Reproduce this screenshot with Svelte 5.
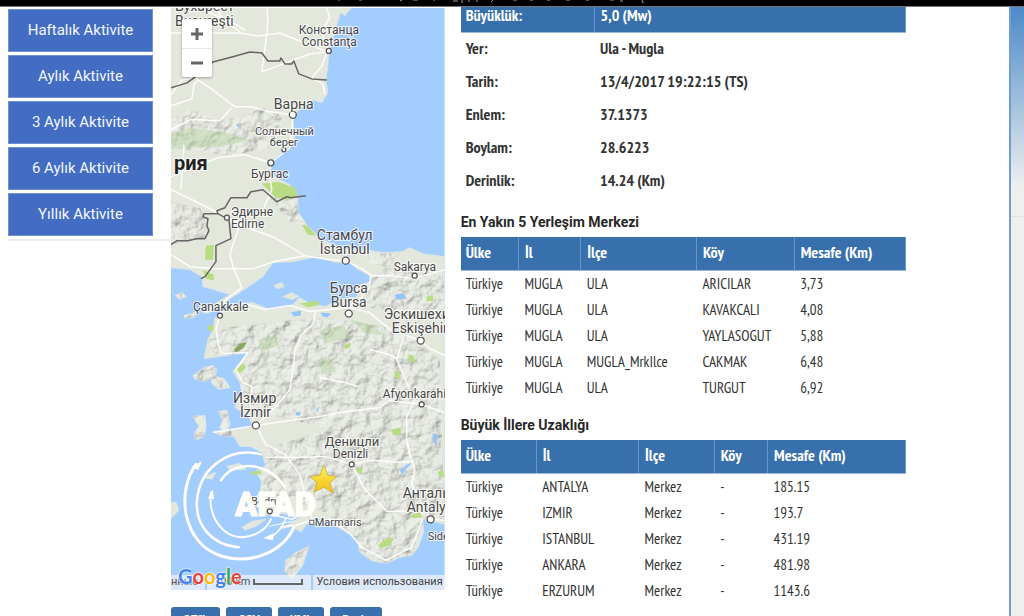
<script>
  const periods = ['Haftalık Aktivite', 'Aylık Aktivite', '3 Aylık Aktivite', '6 Aylık Aktivite', 'Yıllık Aktivite'];

  const details = [
    ['Yer:', 'Ula - Mugla'],
    ['Tarih:', '13/4/2017 19:22:15 (TS)'],
    ['Enlem:', '37.1373'],
    ['Boylam:', '28.6223'],
    ['Derinlik:', '14.24 (Km)']
  ];

  const columns = ['Ülke', 'İl', 'İlçe', 'Köy', 'Mesafe (Km)'];

  const tables = [
    {
      title: 'En Yakın 5 Yerleşim Merkezi',
      kind: 'near',
      rows: [
        ['Türkiye', 'MUGLA', 'ULA', 'ARICILAR', '3,73'],
        ['Türkiye', 'MUGLA', 'ULA', 'KAVAKCALI', '4,08'],
        ['Türkiye', 'MUGLA', 'ULA', 'YAYLASOGUT', '5,88'],
        ['Türkiye', 'MUGLA', 'MUGLA_MrkIlce', 'CAKMAK', '6,48'],
        ['Türkiye', 'MUGLA', 'ULA', 'TURGUT', '6,92']
      ]
    },
    {
      title: 'Büyük İllere Uzaklığı',
      kind: 'far',
      rows: [
        ['Türkiye', 'ANTALYA', 'Merkez', '-', '185.15'],
        ['Türkiye', 'IZMIR', 'Merkez', '-', '193.7'],
        ['Türkiye', 'ISTANBUL', 'Merkez', '-', '431.19'],
        ['Türkiye', 'ANKARA', 'Merkez', '-', '481.98'],
        ['Türkiye', 'ERZURUM', 'Merkez', '-', '1143.6']
      ]
    }
  ];

  const exportsList = ['GEïlk', 'CSV', 'KML', 'Baskı'];

  // x, y (baseline), font size, text
  const labels = [
    [175, 11, 14, 'Бухарест'],
    [175, 26, 14, 'Bucureşti'],
    [299, 34, 12, 'Констанца'],
    [302, 46, 12, 'Constanţa'],
    [274, 109, 14, 'Варна'],
    [255, 135, 11, 'Солнечный'],
    [270, 146, 11, 'берег'],
    [251, 178, 12, 'Бургас'],
    [231, 216, 12, 'Эдирне'],
    [231, 228, 12, 'Edirne'],
    [317, 240, 14, 'Стамбул'],
    [320, 254, 14, 'İstanbul'],
    [394, 271, 12, 'Sakarya'],
    [330, 293, 14, 'Бурса'],
    [331, 307, 14, 'Bursa'],
    [193, 311, 12, 'Çanakkale'],
    [384, 319, 14, 'Эскишехир'],
    [392, 333, 14, 'Eskişehir'],
    [233, 404, 14, 'Измир'],
    [240, 418, 14, 'İzmir'],
    [383, 399, 12, 'Afyonkarahisar'],
    [325, 447, 13, 'Деницли'],
    [333, 459, 12, 'Denizli'],
    [403, 499, 14, 'Анталья'],
    [407, 513, 14, 'Antalya'],
    [428, 541, 11, 'Side'],
    [315, 527, 11, 'Marmaris'],
    [251, 506, 11, 'Bodrum']
  ];

  // x, y, radius
  const towns = [
    [329, 51, 2.5], [293, 115, 3.5], [271, 163, 3], [227, 218, 2.5], [346, 261, 3.5],
    [415, 276, 2.5], [349, 314, 3.5], [220, 316, 2.5], [421, 341, 3.5], [256, 426, 3.5],
    [422, 405, 2.5], [352, 465, 2.5], [431, 520, 3.5], [270, 512, 2.5], [284, 150, 2]
  ];

  const land = [
    // Balkans and Thrace
    'M171 6L353 6L345 16L341 12L336 28L333 40L329 52L328 67L326 80L328 93L322 103L313 100L303 107L296 113L293 122L295 134L295 143L285 150L278 156L270 162L270 172L280 180L290 185L298 197L298 212L307 225L318 237L337 247L350 250L346 262L337 263L317 257L293 262L273 263L263 277L240 293L222 304L208 314L202 313L217 303L230 295L217 291L203 287L202 277L190 270L171 268Z',
    // Anatolia
    'M350 250L367 250L383 253L403 252L410 248L423 254L445 257V525L423 520L424 533L418 549L412 556L400 558L387 564L373 562L360 553L358 542L350 535L338 528L330 520L316 519L306 526L301 533L292 527L280 530L302 517L280 514L268 516L250 502L260 494L262 483L256 472L266 467L262 453L250 447L240 447L234 437L220 436L213 432L237 430L253 427L249 417L235 408L242 393L240 383L233 372L248 353L220 357L204 359L208 340L213 330L215 318L228 308L240 304L253 303L270 310L293 305L300 298L310 304L325 307L340 300L358 297L355 287L372 282L370 276L357 269L349 262Z',
    // islands
    'M193 376L204 368L213 366L217 370L215 377L224 379L230 388L219 390L212 384L211 378L205 382L195 380Z',
    'M193 417L205 416L206 428L204 437L196 441L194 434L199 427Z',
    'M218 412L227 411L230 425L226 434L220 428L223 421Z',
    'M309 547L295 554L286 561L285 572L292 580L303 566Z',
    'M184 316L198 312L194 318L185 319Z',
    'M175 296L182 293L186 297L180 300Z',
    'M274 286L282 283L284 287L277 289Z',
    'M283 297L292 293L299 297L292 300Z',
    'M171 503L176 503L179 511L171 519Z',
    'M203 478L216 473L212 480Z',
    'M227 467L240 464L246 470L230 471Z',
    'M242 528L252 522L266 520L256 527L245 531Z',
    'M318 11L324 8L330 8L326 12Z'
  ];

  const hills = [
    'M171 118L192 110L218 120L240 118L262 108L285 116L270 148L230 156L171 148Z',
    'M171 202L200 208L209 222L206 238L171 245Z',
    'M280 186L297 204L306 226L290 222L270 198Z',
    'M208 340L225 328L280 322L325 318L400 330L440 360L445 522L424 520L412 556L387 564L360 553L330 515L260 490L268 448L330 430L250 410L240 385L250 355L212 356Z',
    'M360 290L385 268L445 277V320L400 312L365 308Z',
    'M368 255L400 253L390 268L370 264Z',
    'M190 364H232V392H190Z',
    'M192 410H232V442H192Z',
    'M284 546H310V582H284Z',
    'M171 292H200V320H171Z'
  ];

  const forests = [
    'M171 135L190 128L222 132L250 140L220 147L171 149Z',
    'M258 340L275 336L280 345L262 352Z',
    'M318 360L330 358L336 372L322 375Z',
    'M350 320L375 326L384 336L366 334Z',
    'M320 330L345 326L350 338L325 344Z'
  ];

  const parks = [
    'M262 184L278 182L295 188L298 197L288 200L276 198Z',
    'M302 225L308 226L316 236L308 235Z',
    'M206 246L214 245L213 260L205 260Z',
    'M203 270L214 275L214 281L206 279Z',
    'M300 304L318 301L320 305L308 308Z',
    'M235 370L244 364L246 368L240 374Z',
    'M208 326L214 326L213 332L208 331Z',
    'M344 346L351 343L350 348L345 350Z',
    'M409 355L414 356L415 363L409 362Z',
    'M395 371L400 373L400 379L395 378Z',
    'M392 430L401 428L401 436L393 435Z',
    'M379 545L389 538L394 540L390 546L381 549Z',
    'M411 516L420 513L423 518L413 519Z',
    'M250 473L260 471L262 475L251 475Z',
    'M438 473L443 470L445 478L440 477Z',
    'M356 469L363 468L362 474L357 473Z',
    'M427 297L433 296L434 301L427 302Z'
  ];

  const lakes = [
    'M291 313L301 311L301 316L294 317Z',
    'M321 313L331 314L328 318L323 317Z',
    'M400 471L408 465L412 464L406 470L402 475Z',
    'M433 434L438 435L437 447L434 442Z',
    'M395 295L404 294L407 299L397 300Z',
    'M296 413L301 412L300 416L296 416Z',
    'M316 411L320 406L318 412Z',
    'M236 125L239 124L239 128Z'
  ];

  const roads = [
    'M171 33L210 33L240 33L258 36L280 33L310 45L328 52',
    'M214 6L226 22L240 32',
    'M267 6L268 22L266 42L264 56L262 72L310 54L328 52',
    'M327 8L330 18L322 30L324 42L329 50',
    'M200 7L210 13L228 20L245 30',
    'M326 55L322 66L312 78L323 84L325 94',
    'M195 78L210 88L235 107L252 107L270 112L293 115L292 130L290 148L271 163L270 177L272 190L264 208',
    'M171 106L192 99L194 84L198 80',
    'M171 130L190 120L200 120L220 121L232 108',
    'M171 177L195 167L218 158L245 155L271 163',
    'M171 190L192 200L212 210L227 218L250 229L275 238L305 256L330 260L346 261L362 269L372 276L390 276L415 279L445 270',
    'M240 225L234 242L230 255L234 270L242 288L226 300L220 315L216 330L219 347L222 354L248 353',
    'M171 255L190 267L215 269L254 269L274 262L305 256',
    'M184 145L183 160L181 190',
    'M248 353L236 370L243 383L252 387L250 405L256 426L266 445L285 455L300 475L305 495L313 522',
    'M371 277L369 289L362 298L349 308L370 313L392 331L421 341L430 349L445 356',
    'M240 303L265 310L290 306L310 312L349 308M316 311L313 325L302 335L295 350L294 365L290 390L278 405L256 426L213 433',
    'M256 426L290 421L320 417L340 413L380 408L390 401L422 405L445 413M404 337L397 360L405 378L414 400L407 418L407 440L410 455L415 470L412 485L423 505L431 520L445 521',
    'M266 458L305 458L325 457L352 465L365 490L387 512L420 512',
    'M352 465L370 461L400 463L414 462M313 522L330 520L350 534L362 548L386 561L412 548L423 520',
    'M304 514L292 520L270 515M314 520L296 526L280 528',
    'M320 378L345 383L358 387M370 350L390 355L398 360M171 95L182 80L200 76'
  ];

  const borders = [
    'M171 88L187 83L194 78L213 62L232 57L250 52L262 53L268 61L280 61L281 58L285 64L292 64L294 61L299 74L312 79L327 80',
    'M171 245L177 241L188 241L196 239L205 239L209 231L207 226L208 219L203 217L204 214L218 214L217 211L225 208L231 198L247 198L251 192L263 190L277 202L287 197L291 198L306 196',
    'M218 214L229 220L231 239L216 246L216 262L205 277L201 279'
  ];
</script>

<header class="statusbar">
  <svg width="320" height="3" viewBox="0 0 320 3" aria-hidden="true">
    <path d="M4 0V1M24 0h3M65 0l2 1M78 0h5M99 0v1M118 1h5M127 0v3M134 0v2M142 0v2M158 0l-2 2M178 0h4M195 0h3M212 0h3M231 0h4M251 0h3M275 0h4M285 1h3M307 0q0 3 2 3" stroke="#999" fill="none" />
  </svg>
</header>

<div class="page">
  <main>
    <nav>
      {#each periods as period}
        <button class="period" type="button">{period}</button>
      {/each}
    </nav>

    <section class="mapside">
      <div class="map">
        <svg class="terrain" viewBox="171 8 274 583" role="img" aria-label="Harita">
          <defs>
            <filter id="relief" x="0" y="0" width="100%" height="100%">
              <feTurbulence type="fractalNoise" baseFrequency="0.08" numOctaves="4" seed="8" result="noise" />
              <feDiffuseLighting in="noise" surfaceScale="5" lighting-color="#f2f4ef">
                <feDistantLight azimuth="225" elevation="60" />
              </feDiffuseLighting>
              <feComposite in2="SourceGraphic" operator="in" />
            </filter>
            <clipPath id="coast">
              {#each land as d}<path {d} />{/each}
            </clipPath>
            <linearGradient id="gold" x1="0" y1="0" x2="0" y2="1">
              <stop offset="0" stop-color="#fff35a" />
              <stop offset="1" stop-color="#eebd13" />
            </linearGradient>
          </defs>
          <rect x="171" y="7" width="274" height="584" fill="#a3ccff" />
          {#each land as d}
            <path {d} fill="#e4e8dc" stroke="#d6e4e4" stroke-width="1" />
          {/each}
          <g clip-path="url(#coast)">
            {#each hills as d}
              <path {d} fill="#d3ddca" filter="url(#relief)" opacity="0.6" />
            {/each}
            {#each forests as d}
              <path {d} fill="#b5d3a0" opacity="0.45" />
            {/each}
          </g>
          {#each parks as d}<path {d} fill="#b9dc82" />{/each}
          <path d="M234 350L240 344L247 343L243 349L236 353Z" fill="#8aa763" />
          {#each lakes as d}<path {d} fill="#94c4fb" />{/each}
          {#each roads as d}
            <path {d} fill="none" stroke="#fff" stroke-width="1.5" stroke-linejoin="round" opacity="0.9" />
          {/each}
          {#each borders as d}
            <path {d} fill="none" stroke="#666" stroke-width="1.5" stroke-linejoin="round" />
          {/each}
          {#each towns as [cx, cy, r]}
            <circle {cx} {cy} {r} fill="#fff" stroke="#555" stroke-width="1.3" />
          {/each}
          <rect x="310" y="521" width="4" height="4" fill="#fff" stroke="#666" />
          {#each labels as [x, y, size, name]}
            <text class="place" {x} {y} font-size={size}>{name}</text>
          {/each}
          <text class="place country" x="174" y="170" font-size="20">рия</text>

          <!-- AFAD emblem -->
          <g fill="none" stroke="#fffefa" stroke-linecap="round">
            <path d="M196 465C176 492 182 545 222 557C252 566 283 552 294 528" stroke-width="3" />
            <path d="M261 455C231 447 200 467 197 501C195 526 212 546 239 548" stroke-width="2.5" />
            <path d="M221 481C235 459 270 463 285 488" stroke-width="2.5" />
            <path d="M211 493C208 517 222 538 243 538C257 537 267 529 271 520" stroke-width="2" />
            <path d="M286 519C282 530 276 536 268 539" stroke-width="1.5" />
            <path d="M270 527L292 522" stroke-width="1" />
          </g>
          <g fill="#fffefa">
            <path d="M202 462L192 467L198 471Z" />
            <path d="M213 490L208 499L214 500Z" />
            <path d="M263 539L274 534L273 541Z" />
          </g>
          <text class="emblem" x="235" y="517" font-size="33">AFAD</text>
          <path d="M324 466L328 476L337 477L330 484L334 494L324 488L314 493L317 483L310 477L320 476Z" fill="url(#gold)" stroke="#c4a03c" stroke-width="0.7" />
        </svg>

        <div class="zoom">
          <button type="button" aria-label="Yakınlaştır">
            <svg width="12" height="12" viewBox="0 0 12 12"><path d="M6 0V12M0 6H12" stroke="#666" stroke-width="3" /></svg>
          </button>
          <button type="button" aria-label="Uzaklaştır">
            <svg width="12" height="12" viewBox="0 0 12 12"><path d="M0 6H12" stroke="#666" stroke-width="3" /></svg>
          </button>
        </div>

        <footer class="credits">
          <span>нные</span>
          <span class="scale">100 km <i></i></span>
          <a href="#terms">Условия использования</a>
        </footer>
        <a class="google" href="#google"><b class="blue">G</b><b class="red">o</b><b class="yellow">o</b><b class="blue">g</b><b class="green">l</b><b class="red">e</b></a>
      </div>

      <div class="exports">
        {#each exportsList as name}
          <button type="button">{name}</button>
        {/each}
      </div>
    </section>

    <section class="info">
      <table class="summary">
        <thead>
          <tr><th>Büyüklük:</th><th>5,0 (Mw)</th></tr>
        </thead>
        <tbody>
          {#each details as [label, value]}
            <tr><th scope="row">{label}</th><td>{value}</td></tr>
          {/each}
        </tbody>
      </table>

      {#each tables as table}
        <h2>{table.title}</h2>
        <table class={table.kind}>
          <thead>
            <tr>
              {#each columns as column}<th>{column}</th>{/each}
            </tr>
          </thead>
          <tbody>
            {#each table.rows as row}
              <tr>
                {#each row as cell}<td>{cell}</td>{/each}
              </tr>
            {/each}
          </tbody>
        </table>
      {/each}
    </section>
  </main>
  <aside></aside>
</div>

<style>
  :global(body) {
    margin: 0;
    background: #fff;
    font-family: Roboto, sans-serif;
  }

  .statusbar {
    height: 6px;
    padding-left: 335px;
    background: #000;
    border-bottom: 1px solid #777;
  }
  .statusbar svg {
    display: block;
  }

  .page {
    display: flex;
    height: calc(100vh - 7px);
    overflow: hidden;
  }
  main {
    flex: 1;
    min-width: 0;
    display: flex;
    align-items: flex-start;
    padding-left: 8px;
    border-right: 2px solid #6f9fd2;
  }
  aside {
    width: 13px;
    background:
      linear-gradient(#e2e2e2, #e2e2e2) 0 209px / 100% 1px no-repeat,
      linear-gradient(#4b8ac8, #efefef 180px);
  }

  nav {
    flex: 0 0 163px;
    display: flex;
    flex-direction: column;
    gap: 3px;
    padding: 2px 18px 3px 0;
    box-sizing: border-box;
    border-bottom: 2px solid #efefef;
  }
  .period {
    height: 43px;
    padding: 0 0 2px;
    border: 1px solid #6f90d2;
    background: #426dc2;
    color: #f4f6ff;
    font: 15px Roboto, sans-serif;
  }

  .mapside {
    flex: 274 1 0;
    min-width: 0;
    padding-top: 1px;
  }
  .map {
    position: relative;
    overflow: hidden;
  }
  .terrain {
    display: block;
    width: 100%;
    height: auto;
  }
  .place {
    fill: #484848;
    stroke: #fff;
    stroke-opacity: .75;
    stroke-width: 2px;
    paint-order: stroke;
    font-family: Roboto, sans-serif;
  }
  .country {
    font-weight: 700;
    fill: #222;
  }
  .emblem {
    fill: #fffefa;
    stroke: #fffefa;
    stroke-width: 1px;
    font-family: Roboto, sans-serif;
    font-weight: 900;
  }

  .zoom {
    position: absolute;
    left: 11px;
    top: 11px;
    width: 30px;
    background: #fff;
    border-radius: 2px;
    box-shadow: 0 1px 3px rgba(0, 0, 0, .3);
  }
  .zoom button {
    display: flex;
    align-items: center;
    justify-content: center;
    width: 100%;
    height: 29px;
    padding: 0;
    border: 0;
    background: none;
  }
  .zoom button + button {
    border-top: 1px solid #e6e6e6;
  }

  .credits {
    position: absolute;
    left: 0;
    right: 0;
    bottom: 0;
    display: flex;
    gap: 2px;
    height: 15px;
    line-height: 13px;
    font-size: 11px;
    color: #555;
    white-space: nowrap;
  }
  .credits > * {
    background: rgba(245, 245, 245, .7);
  }
  .credits span:first-child {
    width: 34px;
  }
  .credits a {
    flex: 1;
    padding-left: 4px;
    color: #444;
    text-decoration: none;
  }
  .scale {
    display: flex;
    gap: 2px;
    padding: 0 8px 0 7px;
  }
  .scale i {
    width: 46px;
    height: 4px;
    margin-top: 4px;
    border: 2px solid #666;
    border-top: 0;
  }
  .google {
    position: absolute;
    left: 7px;
    bottom: 3px;
    font: 20px/22px Lato, sans-serif;
    text-decoration: none;
    text-shadow: 0 0 2px #fff, 0 0 2px #fff;
  }
  .google b { font-weight: 700; }
  .blue { color: #4285f4; }
  .red { color: #ea4335; }
  .yellow { color: #fbbc05; }
  .green { color: #34a853; }

  .exports {
    display: flex;
    gap: 6px;
    margin-top: 17px;
  }
  .exports button {
    height: 24px;
    padding: 0 12px;
    border: 0;
    border-radius: 3px;
    background: #3870ad;
    color: #fff;
    font: 700 11px Roboto, sans-serif;
  }

  .info {
    flex: 446 1 0;
    min-width: 0;
    padding: 0 103px 0 16px;
  }
  table {
    width: 100%;
    table-layout: fixed;
    border-collapse: collapse;
    font-family: "PT Sans Narrow", "Liberation Sans Narrow", "Roboto Condensed", Roboto, sans-serif;
    font-size: 16px;
    color: #333;
  }
  th,
  td {
    padding: 0 0 0 6px;
    text-align: left;
    white-space: nowrap;
    box-sizing: border-box;
  }
  th:first-child,
  td:first-child {
    padding-left: 5px;
  }
  thead th {
    height: 33px;
    padding-bottom: 2px;
    background: #3870ad;
    color: #fff;
    border-right: 1px solid #6797c6;
    border-bottom: 1px solid #9ab8d8;
  }
  td {
    height: 26px;
    font-size: 15px;
  }

  .summary thead th {
    height: 25px;
    padding-bottom: 8px;
    line-height: 16px;
  }
  .summary tbody th,
  .summary td {
    height: 33px;
    padding-bottom: 2px;
    font-size: 16px;
    font-weight: 700;
  }
  .summary th:first-child { width: 30%; }

  .near th:nth-child(1) { width: 13%; }
  .near th:nth-child(2) { width: 14%; }
  .near th:nth-child(3) { width: 26%; }
  .near th:nth-child(4) { width: 22%; }

  .far th:nth-child(1) { width: 17%; }
  .far th:nth-child(2) { width: 23%; }
  .far th:nth-child(3) { width: 17%; }
  .far th:nth-child(4) { width: 12%; }

  h2 {
    margin: 0;
    padding: 17px 0 7px;
    font: 700 14px/16px Roboto, sans-serif;
    color: #282828;
  }
</style>
